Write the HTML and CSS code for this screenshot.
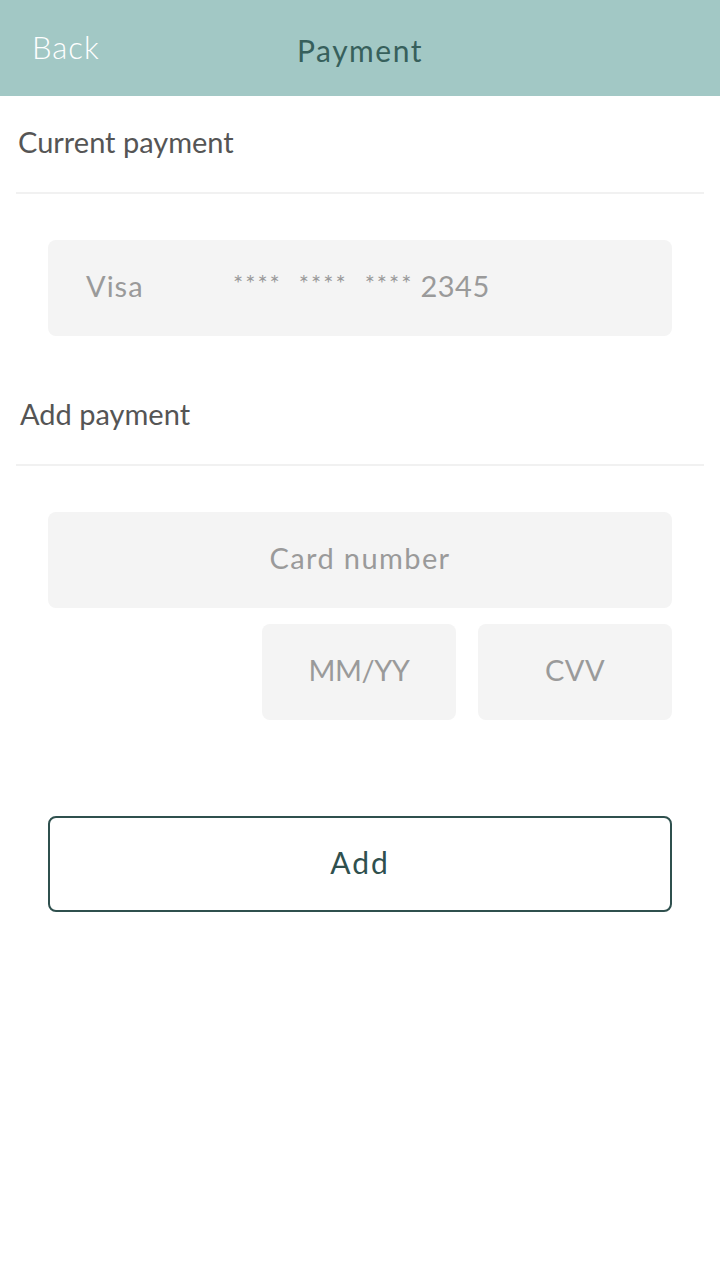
FILE: index.html
```html
<!DOCTYPE html>
<html lang="en">
<head>
<meta charset="utf-8">
<title>Payment</title>
<link rel="stylesheet" href="styles.css">
</head>
<body>
<header class="topbar">
  <span class="back">Back</span>
  <h1 class="title">Payment</h1>
  <span class="spacer"></span>
</header>
<main class="content">
  <h2 class="section-title">Current payment</h2>
  <div class="box-wrap">
    <div class="field card-current">
      <span class="brand">Visa</span>
      <span class="number"><span class="stars">****</span><span class="stars">****</span><span class="stars">****</span><span class="last">2345</span></span>
    </div>
  </div>
  <h2 class="section-title add-title">Add payment</h2>
  <div class="box-wrap form">
    <div class="field placeholder wide">Card number</div>
    <div class="row">
      <div class="field placeholder small expiry">MM/YY</div>
      <div class="field placeholder small">CVV</div>
    </div>
    <button class="add-btn" type="button">Add</button>
  </div>
</main>
</body>
</html>
```
FILE: styles.css
```css
* { box-sizing: border-box; }
html, body { margin: 0; padding: 0; }
body {
  width: 720px;
  height: 1280px;
  background: #ffffff;
  font-family: Lato, "Open Sans", sans-serif;
}
.topbar {
  height: 96px;
  background: #a2c8c5;
  display: grid;
  grid-template-columns: 1fr auto 1fr;
  align-items: center;
}
.back {
  padding-left: 32px;
  padding-bottom: 2px;
  color: #ffffff;
  font-size: 31px;
  font-weight: 300;
  letter-spacing: 1px;
}
.title {
  margin: 0;
  padding-top: 4px;
  color: #37605c;
  font-size: 30px;
  font-weight: 400;
  letter-spacing: 1.5px;
}
.content { display: flex; flex-direction: column; }
.section-title {
  margin: 0 16px;
  height: 98px;
  padding: 0 0 6px 2px;
  display: flex;
  align-items: center;
  border-bottom: 2px solid #f1f1f1;
  color: #555555;
  font-size: 29px;
  font-weight: 400;
}
.add-title { padding-left: 4px; }
.box-wrap {
  padding: 46px 48px 32px;
  display: flex;
  flex-direction: column;
  gap: 16px;
}
.field {
  height: 96px;
  padding-bottom: 6px;
  background: #f4f4f4;
  border-radius: 8px;
  display: flex;
  align-items: center;
  color: #9a9a9a;
  font-size: 29px;
  letter-spacing: 1px;
}
.card-current { padding-left: 38px; }
.brand { width: 147px; }
.number { display: flex; align-items: center; }
.stars {
  font-size: 24px;
  margin-right: 17px;
  letter-spacing: 2px;
  position: relative;
  top: -3px;
}
.stars:nth-child(3) { margin-right: 7px; }
.last { letter-spacing: 0.5px; }
.placeholder { justify-content: center; }
.wide { letter-spacing: 1.4px; }
.row {
  display: flex;
  justify-content: flex-end;
  gap: 22px;
}
.small { width: 194px; letter-spacing: 0.5px; }
.expiry { letter-spacing: -0.5px; }
.add-btn {
  margin-top: 80px;
  height: 96px;
  padding-bottom: 6px;
  background: #ffffff;
  border: 2px solid #2f504e;
  border-radius: 8px;
  color: #2f504e;
  font-family: Lato, "Open Sans", sans-serif;
  font-size: 30px;
  font-weight: 400;
  letter-spacing: 2px;
  cursor: pointer;
}
```
